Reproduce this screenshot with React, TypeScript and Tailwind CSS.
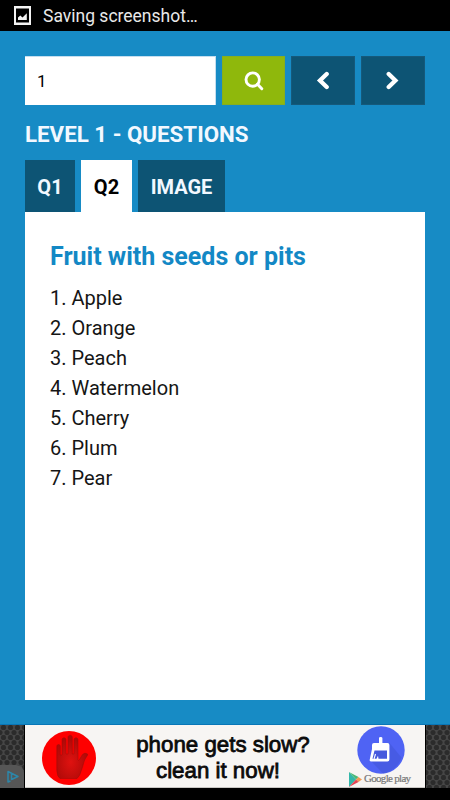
import { useState } from "react";

const fruits = ["Apple", "Orange", "Peach", "Watermelon", "Cherry", "Plum", "Pear"];

const tabs = [
  { id: "q1", label: "Q1", width: "w-[50px]" },
  { id: "q2", label: "Q2", width: "w-[51px]" },
  { id: "image", label: "IMAGE", width: "w-[87px]" },
];

function StatusBar() {
  return (
    <div className="flex h-[31px] shrink-0 items-center bg-black pl-3.5 text-[#e9e9e9]">
      <svg width="17" height="19" viewBox="0 0 17 19">
        <path fill="#f4f4f4" fillRule="evenodd" d="M0 0h17v19H0zM2 2.500v14h13v-14z" />
        <path fill="#f4f4f4" d="M4 14v-2.400l2.300-2 2.200 2L12.800 7.200V14z" />
      </svg>
      <span className="ml-3 text-[17.5px] leading-[30px]">Saving screenshot…</span>
    </div>
  );
}

function SearchBar({ level, onChange }: { level: string; onChange: (value: string) => void }) {
  const navClass =
    "flex h-[49px] w-16 items-center justify-center border border-[#15597b] bg-[#0d5474]";

  return (
    <form className="flex" onSubmit={(e) => e.preventDefault()}>
      <input
        aria-label="Level"
        className="h-[49px] w-[191px] border-t border-r border-[#c5deef] bg-white pl-3 text-[17px] text-black outline-none"
        value={level}
        onChange={(e) => onChange(e.target.value)}
      />
      <button
        type="submit"
        aria-label="Search"
        className="ml-1.5 flex h-[49px] w-[63px] items-center justify-center border border-[#86ae20] bg-[#8fb80c]"
      >
        <svg width="20" height="20" viewBox="0 0 20 20" fill="none" stroke="#fff">
          <circle cx="8.700" cy="8.600" r="6.700" strokeWidth="2.900" />
          <path d="M13.500 13.300l4.300 4.400" strokeWidth="3" strokeLinecap="round" />
        </svg>
      </button>
      <button type="button" aria-label="Previous" className={`ml-1.5 ${navClass}`}>
        <svg width="14" height="20" viewBox="0 0 14 20" fill="none" stroke="#fff" strokeWidth="4.300">
          <path d="M10.700 3L4 9.500l6.700 6.500" strokeLinecap="round" />
        </svg>
      </button>
      <button type="button" aria-label="Next" className={`ml-1.5 ${navClass}`}>
        <svg width="14" height="20" viewBox="0 0 14 20" fill="none" stroke="#fff" strokeWidth="4.300">
          <path d="M2.700 3l6.700 6.500L2.700 16" strokeLinecap="round" />
        </svg>
      </button>
    </form>
  );
}

function AdSide({ badge = false }: { badge?: boolean }) {
  return (
    <div className="relative h-[63px] w-6 overflow-hidden bg-[#464646]">
      <svg className="block" width="24" height="63">
        <defs>
          <pattern id={badge ? "mesh-left" : "mesh-right"} width="7" height="10" patternUnits="userSpaceOnUse">
            <g fill="#2b2b2b">
              <circle cx="3.500" cy="2.500" r="2.600" />
              <circle cx="0" cy="7.500" r="2.600" />
              <circle cx="7" cy="7.500" r="2.600" />
            </g>
          </pattern>
        </defs>
        <rect width="24" height="63" fill={badge ? "url(#mesh-left)" : "url(#mesh-right)"} />
      </svg>
      {badge && (
        <div className="absolute bottom-0 left-0 flex h-[23px] w-6 items-center rounded-tr-lg bg-[#565656] pl-[7px]">
          <svg width="13" height="14" viewBox="0 0 13 14" fill="none" stroke="#2c87aa" strokeWidth="1.500">
            <path d="M4.500 4v5.500l6.500-3L1 1.500v10.500l2.500-1" strokeLinejoin="round" />
          </svg>
        </div>
      )}
    </div>
  );
}

function HandIcon() {
  return (
    <svg width="54" height="54" viewBox="0 0 54 54">
      <defs>
        <radialGradient id="palm" cx="45%" cy="62%" r="55%">
          <stop offset="0" stopColor="#e01210" />
          <stop offset="1" stopColor="#ae0a08" />
        </radialGradient>
      </defs>
      <circle cx="27" cy="27" r="27" fill="#fe0000" />
      <path
        fill="url(#palm)"
        stroke="#9c0d09"
        strokeWidth=".5"
        d="M18 47.500q-3-2-3.200-8V15.500c0-2.600 3.500-2.600 3.500 0V24h1.700V9c0-3 4-3 4 0v14h2V6.500c0-3 4.300-3 4.300 0V23H32V9c0-3 4-3 4 0v19.500q.2 2 1.500 0l2.500-4.200c1.300-2 3.500-2.500 5.500-1.300q.5 1-.6 2.200C41.500 29.500 41.500 34 39.500 39q-1.500 6-4.500 8.500z"
      />
    </svg>
  );
}

function CleanerIcon() {
  return (
    <svg className="block" width="48" height="48" viewBox="0 0 48 48">
      <circle cx="24" cy="24" r="23.700" fill="#4f63f4" />
      <path d="M32.500 17l12 14.500A23.700 23.700 0 0 1 26 47.500L14 35h18z" fill="#4457dc" opacity=".65" />
      <path
        d="M22 12q0-1 1.700-1t1.700 1v5h5q2 0 2 2v14.500q0 2-2 2H14q-1.800 0-1.300-1.800L15 23v-4q0-2 2-2h5z"
        fill="#fff"
      />
      <path d="M17.500 24.500h12.500v8.300h-8.500l-.5-3-1.500 3H15.500z" fill="#4659dd" />
      <path d="M18.500 28l-1.500 5" stroke="#fff" strokeWidth="1.100" />
    </svg>
  );
}

function AdBanner() {
  return (
    <div className="flex h-[75px] shrink-0 items-start justify-between bg-black">
      <AdSide badge />
      <div className="flex h-[63px] w-[400px] border-b border-[#c9c7c4] bg-[#f7f5f3] pl-[17px]">
        <div className="flex w-[62px] items-center pt-1">
          <HandIcon />
        </div>
        <div className="flex w-[238px] flex-col items-center pt-[7px] font-['Liberation_Sans',Arial,sans-serif] text-[22.3px] leading-[26px] font-medium text-[#0b0b0b] [-webkit-text-stroke:0.8px_#0b0b0b]">
          <span>phone gets slow?</span>
          <span className="-ml-2.5">clean it now!</span>
        </div>
        <div className="flex flex-col pt-[1px]">
          <div className="ml-[15px]">
            <CleanerIcon />
          </div>
          <div className="-mt-0.5 ml-[7px] flex items-center">
            <svg width="13" height="15" viewBox="0 0 13 15">
              <path d="M0 0l7 7.500L0 15z" fill="#33b7aa" />
              <path d="M0 0l9.500 5L7 7.500z" fill="#4bb977" />
              <path d="M9.500 5L13 7.500 9.500 10 7 7.500z" fill="#f39b54" />
              <path d="M0 15l7-7.500L9.500 10z" fill="#e54352" />
            </svg>
            <span className="-mt-1 ml-0.5 font-['Liberation_Serif',serif] text-[11px] leading-[14px] tracking-[-0.7px] whitespace-nowrap text-[#777] [-webkit-text-stroke:0.2px_#777]">
              Google play
            </span>
          </div>
        </div>
      </div>
      <AdSide />
    </div>
  );
}

export default function App() {
  const [level, setLevel] = useState("1");
  const [activeTab, setActiveTab] = useState("q2");

  return (
    <div className="flex h-[800px] w-[450px] flex-col overflow-hidden bg-[#178bc5] font-[Roboto,sans-serif]">
      <StatusBar />
      <main className="flex grow flex-col border-b border-[#0876b7] px-[25px] pt-[25px] pb-6">
        <SearchBar level={level} onChange={setLevel} />
        <h1 className="mt-[13px] h-[42px] text-[22.3px] leading-[33px] font-bold whitespace-nowrap text-[#f2f8ff]">
          LEVEL 1 - QUESTIONS
        </h1>
        <div className="flex gap-1.5">
          {tabs.map((tab) => (
            <button
              key={tab.id}
              type="button"
              onClick={() => setActiveTab(tab.id)}
              className={`h-[52px] pt-0.5 text-center text-xl font-bold ${tab.width} ${
                activeTab === tab.id ? "bg-white text-black" : "bg-[#0d5474] text-[#f2f8ff]"
              }`}
            >
              {tab.label}
            </button>
          ))}
        </div>
        <section className="grow bg-white px-[25px] pt-7">
          <h2 className="text-[25px] leading-[33px] font-bold whitespace-nowrap text-[#1388c5]">
            Fruit with seeds or pits
          </h2>
          <ol className="mt-2.5 text-xl leading-[30px] text-[#151515]">
            {fruits.map((fruit, i) => (
              <li key={fruit}>
                {i + 1}. {fruit}
              </li>
            ))}
          </ol>
        </section>
      </main>
      <AdBanner />
    </div>
  );
}
